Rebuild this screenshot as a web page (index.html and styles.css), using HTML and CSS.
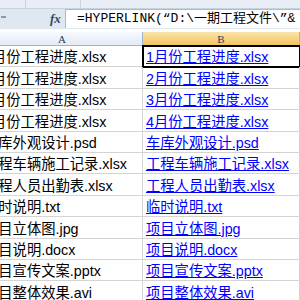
FILE: index.html
```html
<!DOCTYPE html>
<html lang="zh-CN">
<head>
  <meta charset="UTF-8" />
  <title>Excel - 超链接</title>
  <link rel="stylesheet" href="styles.css">
</head>
<body>

<div class="ribbon"><span class="ribbon-sep"></span><span class="ribbon-sep wide"></span></div>

<div class="formula-bar">
  <div class="name-box"><span class="dash"></span></div>
  <div class="fx">fx</div>
  <div class="formula">=HYPERLINK(“D:\一期工程文件\”&amp;</div>
</div>

<div class="sheet">
  <div class="col-heads">
    <div class="head col-a">A</div>
    <div class="head col-b selected">B</div>
  </div>

  <div class="row">
    <div class="cell col-a">1月份工程进度.xlsx</div>
    <div class="cell col-b active"><a href="#">1月份工程进度.xlsx</a></div>
  </div>
  <div class="row">
    <div class="cell col-a">2月份工程进度.xlsx</div>
    <div class="cell col-b"><a href="#">2月份工程进度.xlsx</a></div>
  </div>
  <div class="row">
    <div class="cell col-a">3月份工程进度.xlsx</div>
    <div class="cell col-b"><a href="#">3月份工程进度.xlsx</a></div>
  </div>
  <div class="row">
    <div class="cell col-a">4月份工程进度.xlsx</div>
    <div class="cell col-b"><a href="#">4月份工程进度.xlsx</a></div>
  </div>
  <div class="row">
    <div class="cell col-a">车库外观设计.psd</div>
    <div class="cell col-b"><a href="#">车库外观设计.psd</a></div>
  </div>
  <div class="row">
    <div class="cell col-a">工程车辆施工记录.xlsx</div>
    <div class="cell col-b"><a href="#">工程车辆施工记录.xlsx</a></div>
  </div>
  <div class="row">
    <div class="cell col-a">工程人员出勤表.xlsx</div>
    <div class="cell col-b"><a href="#">工程人员出勤表.xlsx</a></div>
  </div>
  <div class="row">
    <div class="cell col-a">临时说明.txt</div>
    <div class="cell col-b"><a href="#">临时说明.txt</a></div>
  </div>
  <div class="row">
    <div class="cell col-a">项目立体图.jpg</div>
    <div class="cell col-b"><a href="#">项目立体图.jpg</a></div>
  </div>
  <div class="row">
    <div class="cell col-a">项目说明.docx</div>
    <div class="cell col-b"><a href="#">项目说明.docx</a></div>
  </div>
  <div class="row">
    <div class="cell col-a">项目宣传文案.pptx</div>
    <div class="cell col-b"><a href="#">项目宣传文案.pptx</a></div>
  </div>
  <div class="row">
    <div class="cell col-a">项目整体效果.avi</div>
    <div class="cell col-b"><a href="#">项目整体效果.avi</a></div>
  </div>
</div>

</body>
</html>
```

FILE: styles.css
```css
body { margin: 0; width: 300px; height: 300px; overflow: hidden; background: #fff; font-family: "Liberation Sans", "Noto Sans CJK SC", sans-serif; }

.ribbon { height: 8px; background: #e9eef6; border-bottom: 1px solid #c5d2e2; display: flex; }
.ribbon-sep { width: 25px; border-right: 1px solid #c9d4e2; }
.ribbon-sep.wide { width: 54px; }

.formula-bar { display: flex; height: 19px; background: #dfe7f1; border-bottom: 1px solid #dfe7f1; }
.name-box { width: 44px; display: flex; align-items: center; }
.dash { width: 5px; height: 2px; margin-left: 1px; margin-top: -4px; background: #8a9bb0; }
.fx { width: 21px; font-family: "Liberation Serif", serif; font-style: italic; font-weight: bold; font-size: 13px; color: #34495e; line-height: 19px; padding-left: 6px; box-sizing: border-box; }
.formula { flex: 1; background: #fff; border-left: 1px solid #abbad0; border-top: 1px solid #abbad0; padding-left: 11px; font-family: "Liberation Mono", "Noto Sans CJK SC", monospace; font-size: 13px; line-height: 18px; white-space: nowrap; overflow: hidden; color: #000; }

.sheet { overflow: hidden; padding-top: 3px; background: #fff; }
.col-heads { display: flex; height: 14px; }
.head { box-sizing: border-box; font-size: 11px; line-height: 14px; text-align: center; color: #2a3f5a; background: linear-gradient(#f8fafd, #e3eaf4); border-right: 1px solid #9eb6ce; border-bottom: 1px solid #9eb6ce; font-family: "Liberation Serif", serif; }
.head.selected { background: linear-gradient(#fbe3aa, #f2c55f); border-bottom-color: #e9952e; color: #2a3f5a; }

.row { display: flex; height: 21.4px; }
.col-a { width: 161px; margin-left: -18px; flex: none; }
.col-b { flex: 1; }
.cell { box-sizing: border-box; border-right: 1px solid #d4d4d4; border-bottom: 1px solid #d4d4d4; padding: 0 2px 0 2px; font-size: 14.3px; line-height: 18px; white-space: nowrap; overflow: hidden; display: flex; align-items: flex-end; color: #000; }
.cell.col-b { padding-left: 3px; }
.cell a { color: #0000ff; text-decoration: underline; }
.active { outline: 2px solid #000; outline-offset: -1px; }
```
